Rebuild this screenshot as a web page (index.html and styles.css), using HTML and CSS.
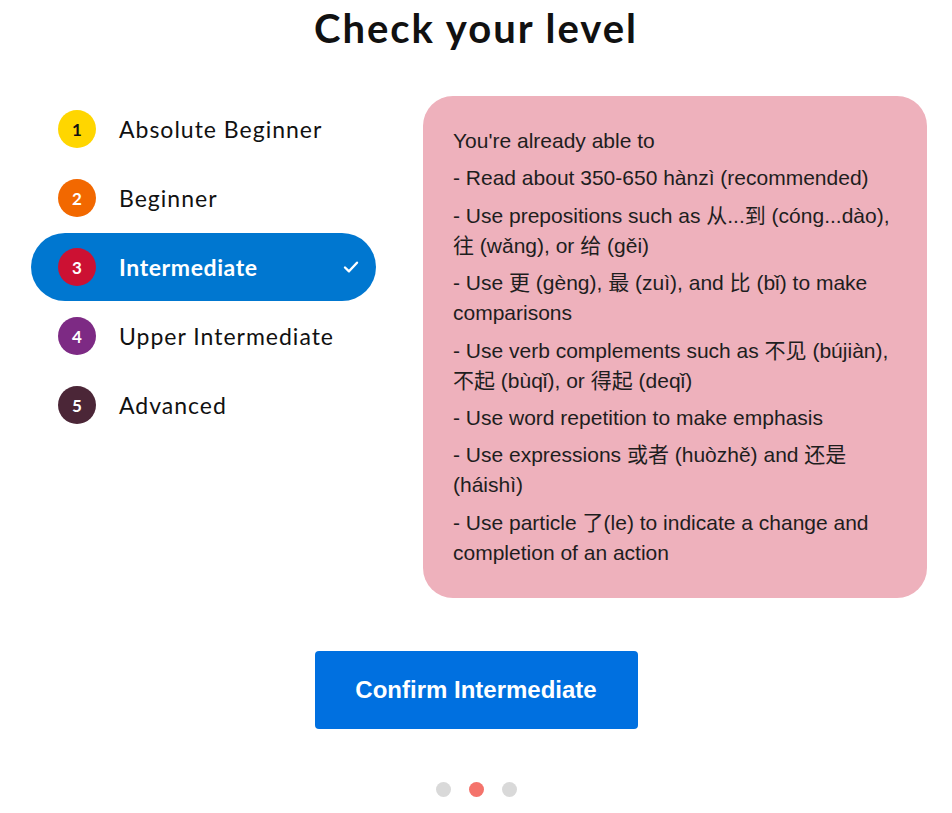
FILE: index.html
```html
<!DOCTYPE html>
<html lang="en">
<head>
<meta charset="utf-8">
<title>Check your level</title>
<link rel="stylesheet" href="styles.css">
</head>
<body>
<main class="page">
  <h1 class="title">Check your level</h1>
  <div class="content">
    <ul class="levels">
      <li class="level"><span class="num n1">1</span><span class="label">Absolute Beginner</span></li>
      <li class="level"><span class="num n2">2</span><span class="label">Beginner</span></li>
      <li class="level active"><span class="num n3">3</span><span class="label">Intermediate</span>
        <svg class="check" viewBox="0 0 16 16" width="16" height="16"><path d="M2 8.5l4 3.8 8-8.6" fill="none" stroke="#fff" stroke-width="2.4" stroke-linecap="round" stroke-linejoin="round"/></svg>
      </li>
      <li class="level"><span class="num n4">4</span><span class="label">Upper Intermediate</span></li>
      <li class="level"><span class="num n5">5</span><span class="label">Advanced</span></li>
    </ul>
    <section class="card">
      <p>You're already able to</p>
      <p>- Read about 350-650 hànzì (recommended)</p>
      <p>- Use prepositions such as 从...到 (cóng...dào), 往 (wǎng), or 给 (gěi)</p>
      <p>- Use 更 (gèng), 最 (zuì), and 比 (bǐ) to make comparisons</p>
      <p>- Use verb complements such as 不见 (bújiàn), 不起 (bùqǐ), or 得起 (deqǐ)</p>
      <p>- Use word repetition to make emphasis</p>
      <p>- Use expressions 或者 (huòzhě) and 还是 (háishì)</p>
      <p>- Use particle 了(le) to indicate a change and completion of an action</p>
    </section>
  </div>
  <div class="actions">
    <button class="confirm">Confirm Intermediate</button>
  </div>
  <div class="dots">
    <span class="dot"></span><span class="dot on"></span><span class="dot"></span>
  </div>
</main>
</body>
</html>
```
FILE: styles.css
```css
* { box-sizing: border-box; }
html, body { margin: 0; padding: 0; background: #fff; }
body { font-family: "Lato", "Noto Sans", sans-serif; color: #111; }
.page { width: 952px; }
.title {
  margin: 0;
  padding-top: 5px;
  height: 95px;
  text-align: center;
  font-family: "Lato", sans-serif;
  font-weight: 700;
  font-size: 40px;
  letter-spacing: 2px;
  line-height: 46px;
  color: #111;
}
.content {
  display: flex;
  align-items: flex-start;
  gap: 47px;
  padding: 0 25px 0 31px;
}
.levels {
  list-style: none;
  margin: 0;
  padding: 0;
  width: 345px;
  display: flex;
  flex-direction: column;
  gap: 1px;
}
.level {
  height: 68px;
  display: flex;
  align-items: center;
  padding-left: 27px;
  padding-right: 17px;
  border-radius: 34px;
  font-size: 23px;
  letter-spacing: 1px;
  color: #111;
}
.level.active { background: #0077d0; color: #fff; }
.num {
  width: 38px;
  height: 38px;
  border-radius: 50%;
  display: flex;
  align-items: center;
  justify-content: center;
  font-size: 17px;
  font-weight: 700;
  letter-spacing: 0;
  color: #fff;
  margin-right: 23px;
  flex: none;
}
.n1 { background: #ffd600; color: #111; }
.n2 { background: #f26800; }
.n3 { background: #cc1133; }
.n4 { background: #7d2a84; }
.n5 { background: #4b2637; }
.label { flex: 1; }
.level.active .label { font-weight: 700; letter-spacing: 0.6px; }
.check { flex: none; }
.card {
  width: 504px;
  background: #eeb1bc;
  border-radius: 30px;
  padding: 30px 30px 30px 30px;
  margin-top: 1px;
  font-family: "Liberation Sans", "Noto Sans CJK SC", sans-serif;
  font-size: 21px;
  line-height: 30px;
  color: #1e1e1e;
}
.card p { margin: 0 0 7.4px; }
.card p:last-child { margin-bottom: 0; }
.actions {
  display: flex;
  justify-content: center;
  padding-top: 53px;
}
.confirm {
  width: 323px;
  height: 78px;
  border: 0;
  border-radius: 4px;
  background: #0070e0;
  color: #fff;
  font-family: "Liberation Sans", sans-serif;
  font-weight: 700;
  font-size: 24px;
}
.dots {
  display: flex;
  justify-content: center;
  gap: 18px;
  padding-top: 53px;
}
.dot { width: 15px; height: 15px; border-radius: 50%; background: #d9d9d9; }
.dot.on { background: #f4736b; }
```
